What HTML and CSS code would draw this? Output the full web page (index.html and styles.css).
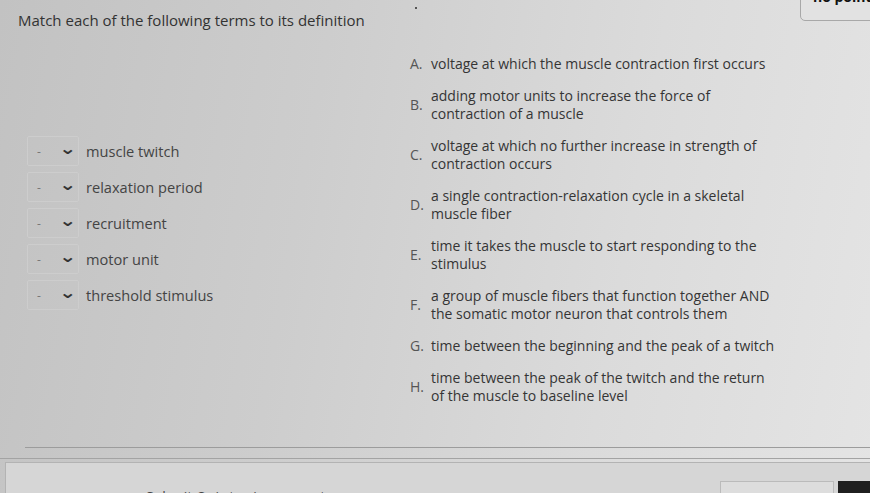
FILE: index.html
```html
<!DOCTYPE html>
<html lang="en">
<head>
    <meta charset="UTF-8">
    <meta name="viewport" content="width=device-width, initial-scale=1.0">
    <title>Matching question</title>
    <link rel="stylesheet" href="styles.css">
</head>
<body>
    <div class="points-box">no points</div>
    <span class="speck"></span>

    <div class="question">
        <div class="prompt">Match each of the following terms to its definition</div>

        <div class="match-area">
            <div class="terms">
                <div class="term-row">
                    <div class="picker"><span class="dash">-</span><span class="chev">&#8964;</span></div>
                    <span class="term">muscle twitch</span>
                </div>
                <div class="term-row">
                    <div class="picker"><span class="dash">-</span><span class="chev">&#8964;</span></div>
                    <span class="term">relaxation period</span>
                </div>
                <div class="term-row">
                    <div class="picker"><span class="dash">-</span><span class="chev">&#8964;</span></div>
                    <span class="term">recruitment</span>
                </div>
                <div class="term-row">
                    <div class="picker"><span class="dash">-</span><span class="chev">&#8964;</span></div>
                    <span class="term">motor unit</span>
                </div>
                <div class="term-row">
                    <div class="picker"><span class="dash">-</span><span class="chev">&#8964;</span></div>
                    <span class="term">threshold stimulus</span>
                </div>
            </div>

            <ol class="definitions">
                <li><span class="letter">A.</span><span class="def">voltage at which the muscle contraction first occurs</span></li>
                <li><span class="letter">B.</span><span class="def">adding motor units to increase the force of<br>contraction of a muscle</span></li>
                <li><span class="letter">C.</span><span class="def">voltage at which no further increase in strength of<br>contraction occurs</span></li>
                <li><span class="letter">D.</span><span class="def">a single contraction-relaxation cycle in a skeletal<br>muscle fiber</span></li>
                <li><span class="letter">E.</span><span class="def">time it takes the muscle to start responding to the<br>stimulus</span></li>
                <li><span class="letter">F.</span><span class="def">a group of muscle fibers that function together AND<br>the somatic motor neuron that controls them</span></li>
                <li><span class="letter">G.</span><span class="def">time between the beginning and the peak of a twitch</span></li>
                <li><span class="letter">H.</span><span class="def">time between the peak of the twitch and the return<br>of the muscle to baseline level</span></li>
            </ol>
        </div>
    </div>

    <div class="divider"></div>
    <div class="divider full"></div>

    <div class="footer-panel">
        <div class="footer-text">Submit Quiz to view correct answers</div>
        <div class="footer-btns">
            <div class="btn-light"></div>
            <div class="btn-dark"></div>
        </div>
    </div>
</body>
</html>
```

FILE: styles.css
```css
body {
    margin: 0;
    height: 493px;
    overflow: hidden;
    font-family: "Open Sans", "DejaVu Sans", sans-serif;
    color: #3a3a3a;
    background: linear-gradient(100deg, #c2c2c2 0%, #cdcdcd 35%, #dbdbdb 70%, #e4e4e4 100%);
    position: relative;
}

/* tab peeking in at the top right */
.points-box {
    position: absolute;
    top: -12px;
    right: -20px;
    width: 76px;
    height: 31px;
    border: 1px solid #a8a8a8;
    border-radius: 0 0 0 5px;
    background: #e2e2e2;
    font-weight: bold;
    font-size: 14px;
    color: #111;
    padding-left: 12px;
    line-height: 16px;
}
.speck {
    position: absolute;
    top: 7px;
    left: 415px;
    width: 2px;
    height: 2px;
    background: #555;
}

.question {
    padding: 10px 0 0 18px;
}
.prompt {
    font-size: 15px;
    color: #333;
}

.match-area {
    display: flex;
    align-items: flex-start;
}

.terms {
    margin-top: 103px;
    margin-left: 9px;
    width: 383px;
}
.term-row {
    display: flex;
    align-items: center;
    height: 36px;
}
.picker {
    width: 52px;
    height: 30px;
    border: 1px solid #cdcdcd;
    border-radius: 2px;
    display: flex;
    align-items: center;
    box-sizing: border-box;
}
.dash {
    font-size: 12px;
    color: #777;
    margin-left: 9px;
}
.chev {
    font-size: 16px;
    color: #333;
    margin-left: 20px;
    font-weight: bold;
    line-height: 10px;
    transform: scaleX(1.3) translateY(-3px);
}
.term {
    font-size: 14.6px;
    margin-left: 7px;
    color: #444;
}

.definitions {
    list-style: none;
    margin: 25px 0 0 0;
    padding: 0;
    font-size: 14px;
    line-height: 18px;
}
.definitions li {
    display: flex;
    align-items: center;
    margin-bottom: 14px;
}
.letter {
    width: 21px;
    flex-shrink: 0;
    color: #555;
}
.def {
    color: #353535;
}

.divider {
    margin-top: 28px;
    margin-left: 25px;
    height: 1px;
    background: #9c9c9c;
}
.divider.full {
    margin-top: 10px;
    margin-left: 0;
    background: #a3a3a3;
}

.footer-panel {
    margin: 3px 0 0 5px;
    height: 40px;
    border: 1px solid #b3b3b3;
    border-right: none;
    background: #d6d6d6;
    display: flex;
    justify-content: space-between;
    align-items: flex-end;
    overflow: hidden;
}
.footer-text {
    font-size: 14px;
    color: #444;
    margin-left: 140px;
    transform: translateY(3px);
}
.footer-btns {
    display: flex;
    gap: 4px;
    transform: translateY(10px);
}
.btn-light {
    width: 112px;
    height: 30px;
    border: 1px solid #bbb;
    background: #dddddd;
}
.btn-dark {
    width: 32px;
    height: 30px;
    background: #1f1f1f;
}
```
